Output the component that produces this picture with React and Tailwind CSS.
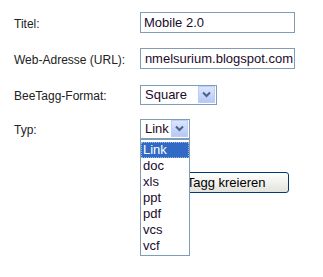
import React from "react";

const options = ["Link", "doc", "xls", "ppt", "pdf", "vcs", "vcf"];

// small XP-style combo arrow
const ComboArrow = () => (
  <div className="flex h-[17px] w-[17px] items-center justify-center border border-[#bccdf7] bg-gradient-to-b from-[#dbe5fe] to-[#b6c8f6]">
    <svg width="9" height="7" viewBox="0 0 9 7">
      <path d="M1 1.5 L4.5 5 L8 1.5" fill="none" stroke="#4d6185" strokeWidth="2" />
    </svg>
  </div>
);

const Label = ({ children }) => (
  <div className="pt-[3px] text-[12px] text-[#222]">{children}</div>
);

const App = () => {
  return (
    <div className="relative h-[277px] w-[323px] bg-white font-['Liberation_Sans',Arial,sans-serif]">
      <div className="grid grid-cols-[126px_155px] items-center gap-y-[15px] pl-[14px] pt-[12px]">
        <Label>Titel:</Label>
        <div className="flex h-[21px] items-center overflow-hidden whitespace-nowrap border border-[#7f9db9] px-[3px] text-[13px] text-[#1a0a2a]">
          Mobile 2.0
        </div>

        <Label>Web-Adresse (URL):</Label>
        <div className="flex h-[21px] items-center justify-end overflow-hidden whitespace-nowrap border border-[#7f9db9] pr-[1px] text-[13px] text-[#1a0a2a]">
          nmelsurium.blogspot.com
        </div>

        <Label>BeeTagg-Format:</Label>
        <div className="flex h-[20px] w-[77px] items-center justify-between border border-[#7f9db9] pl-[4px] pr-[1px] text-[13px] text-[#1a0a2a]">
          <span>Square</span>
          <ComboArrow />
        </div>

        <div className="-mt-[2px]">
          <Label>Typ:</Label>
        </div>
        <div className="relative -mt-[2px] w-[50px]">
          <div className="flex h-[20px] items-center justify-between border border-[#7f9db9] pl-[4px] pr-[1px] text-[13px] text-[#1a0a2a]">
            <span>Link</span>
            <ComboArrow />
          </div>
          {/* open dropdown list */}
          <div className="absolute left-0 top-full z-10 w-[50px] border border-[#7f9db9] bg-white pb-[1px] pt-[2px] text-[13px] text-[#1a0a2a]">
            {options.map((o, i) => (
              <div
                key={o}
                className={
                  i === 0
                    ? "flex h-[16px] items-center border border-dotted border-[#9fb6e0] bg-[#316ac5] pl-[1px] text-white"
                    : "flex h-[16px] items-center pl-[2px]"
                }
              >
                {o}
              </div>
            ))}
          </div>
        </div>

        <div />
        <div className="mt-[18px]">
          <button className="flex h-[21px] w-[149px] items-center justify-center rounded-[3px] border border-[#003c74] bg-gradient-to-b from-white to-[#e3e3dc] text-[13px] text-black">
            BeeTagg kreieren
          </button>
        </div>
      </div>
    </div>
  );
};

export default App;
